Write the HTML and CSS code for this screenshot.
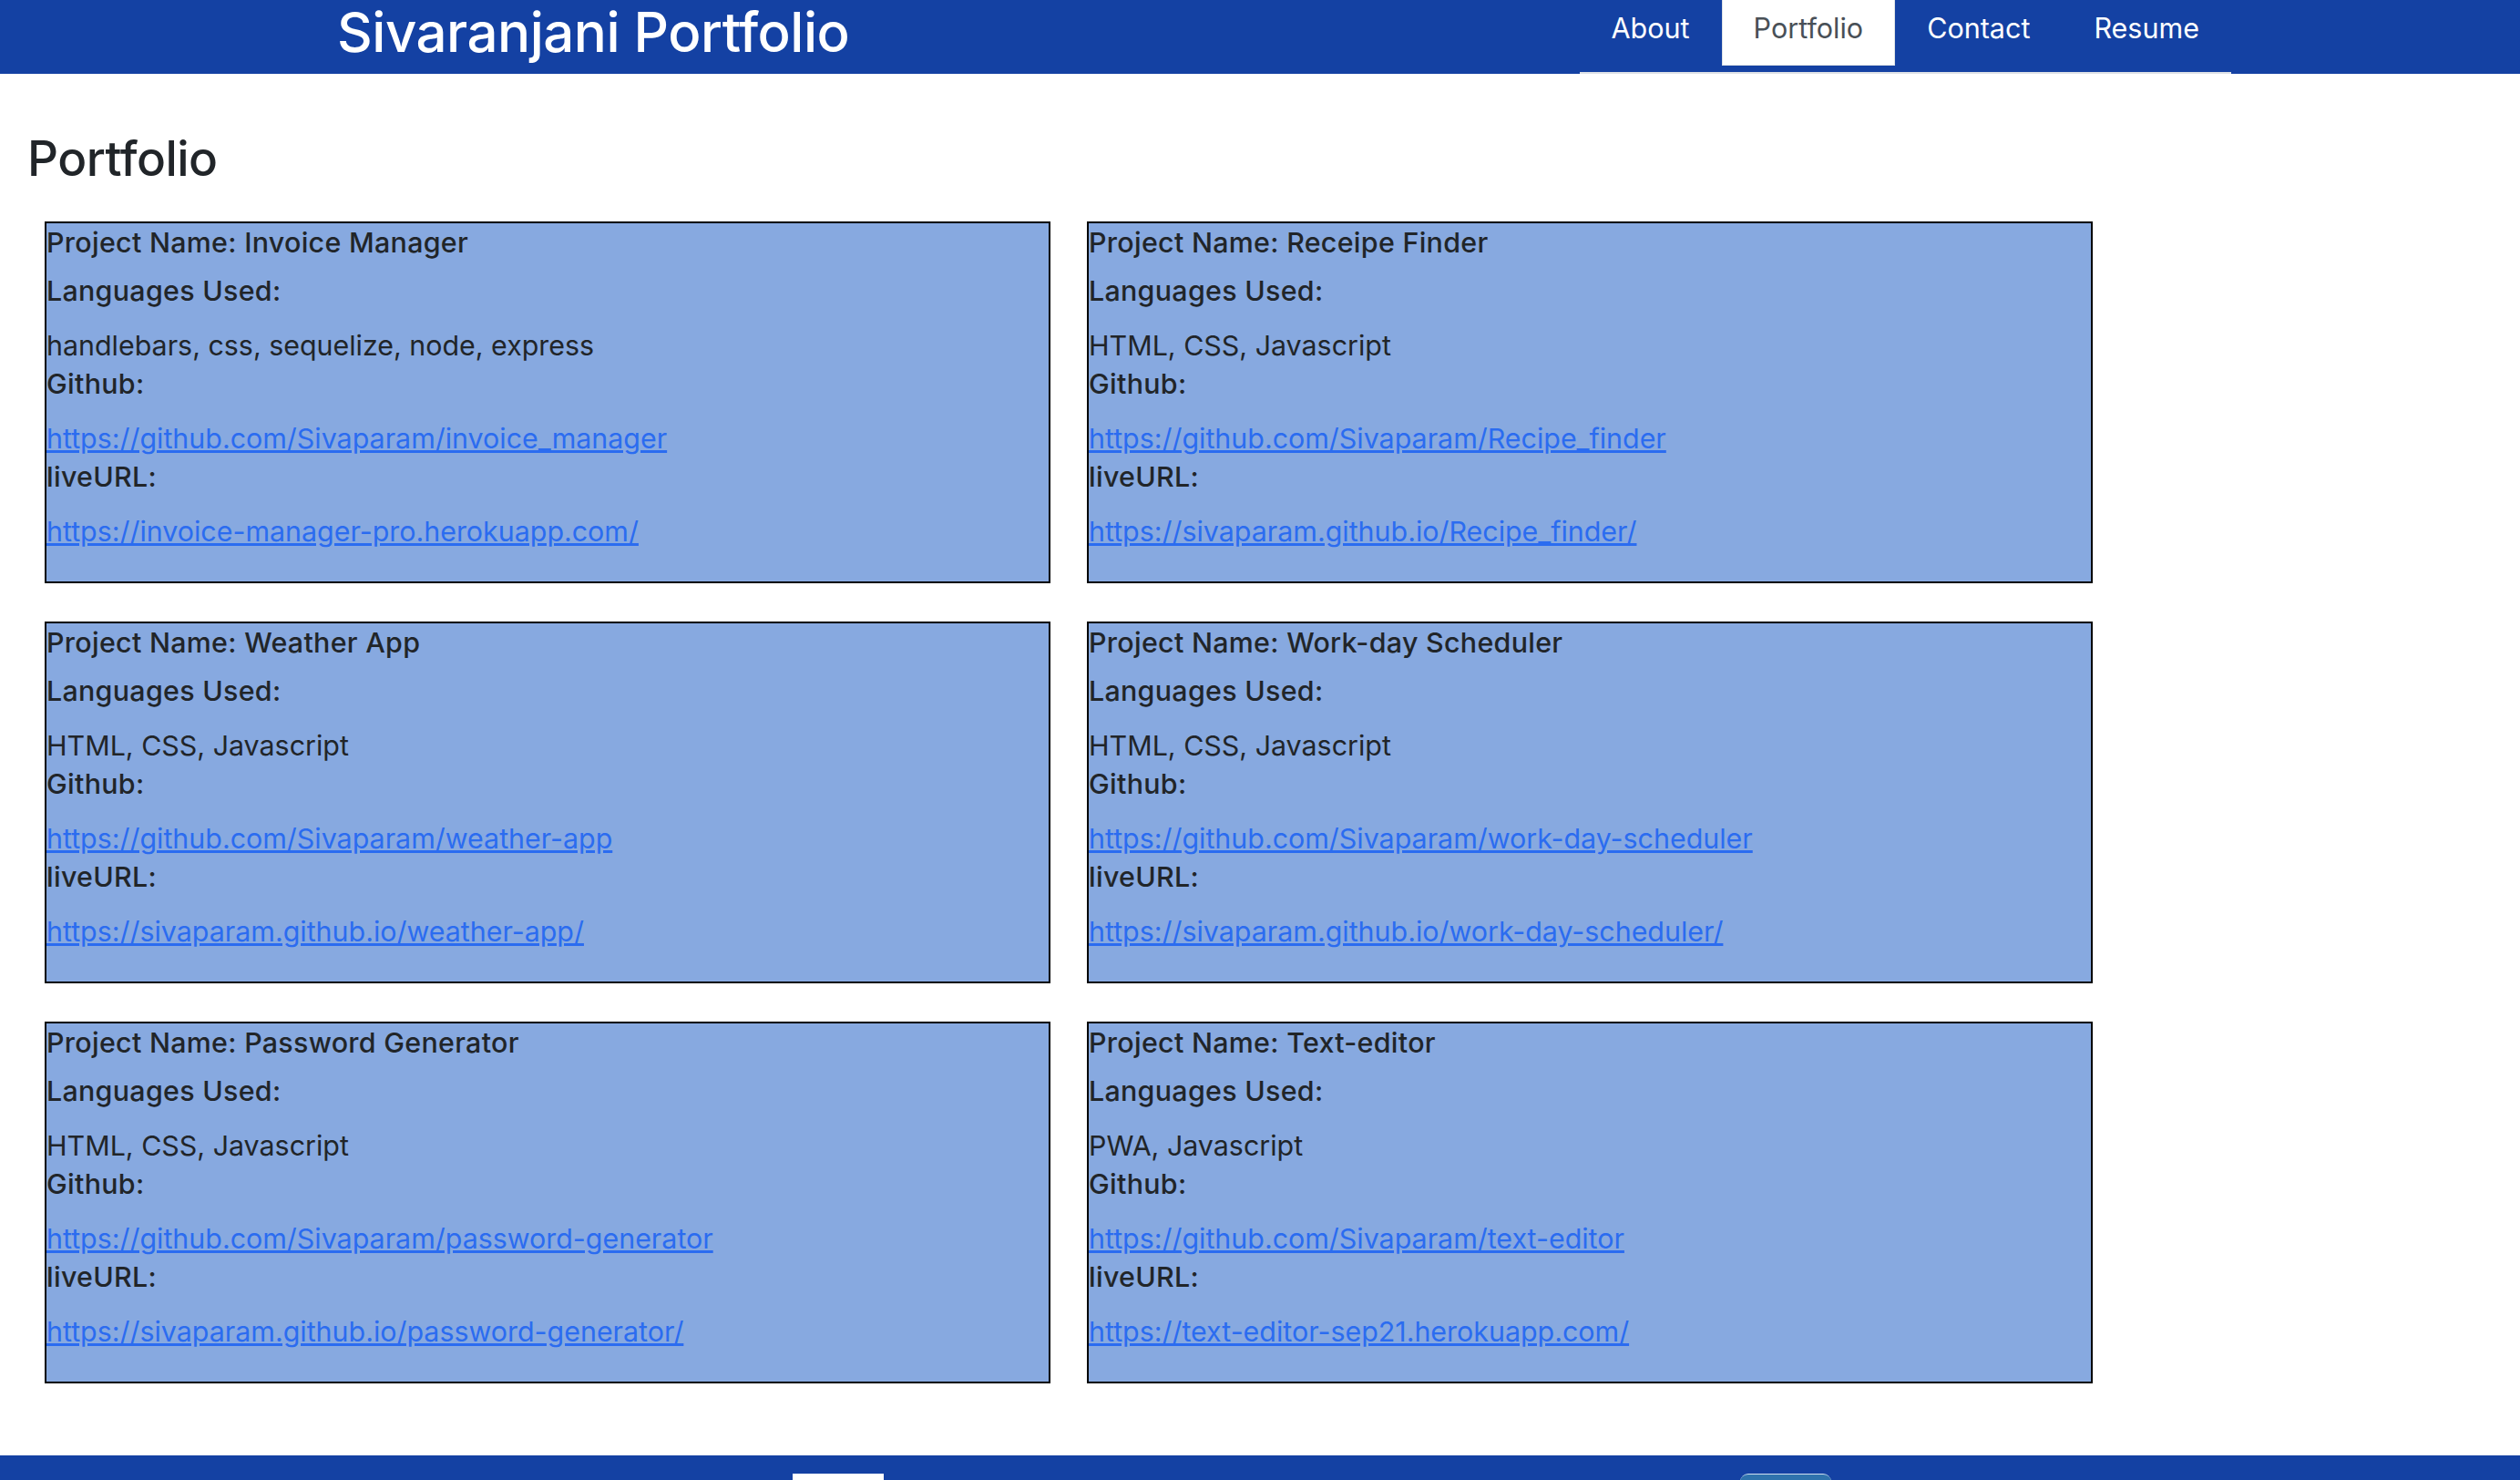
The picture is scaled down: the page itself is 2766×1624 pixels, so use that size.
FILE: index.html
```html
<!DOCTYPE html>
<html lang="en">
<head>
<meta charset="utf-8">
<title>Sivaranjani Portfolio</title>
<link rel="stylesheet" href="styles.css">
</head>
<body>
<header class="site-header">
  <h1 class="brand">Sivaranjani Portfolio</h1>
  <nav class="tabs">
    <a class="tab" href="#">About</a>
    <a class="tab active" href="#">Portfolio</a>
    <a class="tab" href="#">Contact</a>
    <a class="tab" href="#">Resume</a>
  </nav>
</header>
<main class="main">
  <h2 class="page-title">Portfolio</h2>
  <div class="grid">
    <section class="card">
      <div class="label title">Project Name: Invoice Manager</div>
      <div class="label lang">Languages Used:</div>
      <div class="value">handlebars, css, sequelize, node, express</div>
      <div class="label">Github:</div>
      <a class="link" href="#">https://github.com/Sivaparam/invoice_manager</a>
      <div class="label">liveURL:</div>
      <a class="link" href="#">https://invoice-manager-pro.herokuapp.com/</a>
    </section>
    <section class="card">
      <div class="label title">Project Name: Receipe Finder</div>
      <div class="label lang">Languages Used:</div>
      <div class="value">HTML, CSS, Javascript</div>
      <div class="label">Github:</div>
      <a class="link" href="#">https://github.com/Sivaparam/Recipe_finder</a>
      <div class="label">liveURL:</div>
      <a class="link" href="#">https://sivaparam.github.io/Recipe_finder/</a>
    </section>
    <section class="card">
      <div class="label title">Project Name: Weather App</div>
      <div class="label lang">Languages Used:</div>
      <div class="value">HTML, CSS, Javascript</div>
      <div class="label">Github:</div>
      <a class="link" href="#">https://github.com/Sivaparam/weather-app</a>
      <div class="label">liveURL:</div>
      <a class="link" href="#">https://sivaparam.github.io/weather-app/</a>
    </section>
    <section class="card">
      <div class="label title">Project Name: Work-day Scheduler</div>
      <div class="label lang">Languages Used:</div>
      <div class="value">HTML, CSS, Javascript</div>
      <div class="label">Github:</div>
      <a class="link" href="#">https://github.com/Sivaparam/work-day-scheduler</a>
      <div class="label">liveURL:</div>
      <a class="link" href="#">https://sivaparam.github.io/work-day-scheduler/</a>
    </section>
    <section class="card">
      <div class="label title">Project Name: Password Generator</div>
      <div class="label lang">Languages Used:</div>
      <div class="value">HTML, CSS, Javascript</div>
      <div class="label">Github:</div>
      <a class="link" href="#">https://github.com/Sivaparam/password-generator</a>
      <div class="label">liveURL:</div>
      <a class="link" href="#">https://sivaparam.github.io/password-generator/</a>
    </section>
    <section class="card">
      <div class="label title">Project Name: Text-editor</div>
      <div class="label lang">Languages Used:</div>
      <div class="value">PWA, Javascript</div>
      <div class="label">Github:</div>
      <a class="link" href="#">https://github.com/Sivaparam/text-editor</a>
      <div class="label">liveURL:</div>
      <a class="link" href="#">https://text-editor-sep21.herokuapp.com/</a>
    </section>
  </div>
</main>
<footer class="site-footer">
  <span class="icon icon-github"></span>
  <span class="icon icon-linkedin"></span>
</footer>
</body>
</html>
```
FILE: styles.css
```css
html, body {
  margin: 0;
  padding: 0;
}
body {
  font-family: Inter, "Noto Sans", "Liberation Sans", sans-serif;
  color: #212529;
  background: #fff;
}
.site-header {
  height: 81px;
  background: #1441a3;
  display: flex;
  justify-content: space-between;
  align-items: flex-start;
  padding: 0 317px 0 370px;
}
.brand {
  margin: 0;
  color: #fff;
  font-size: 60px;
  font-weight: 500;
  line-height: 1;
  letter-spacing: -0.5px;
  padding-top: 5px;
}
.tabs {
  display: flex;
  align-items: flex-start;
  height: 79px;
  border-bottom: 2px solid #dee2e6;
}
.tab {
  display: block;
  height: 72px;
  box-sizing: border-box;
  padding: 0 34px;
  font-size: 30.5px;
  line-height: 62px;
  color: #fff;
  text-decoration: none;
  border: 1px solid transparent;
  border-top: 0;
}
.tab.active {
  background: #fff;
  color: #495057;
  border-color: #dee2e6;
}
.main {
  padding: 60px 0 79px 0;
}
.page-title {
  margin: 0 0 35px 30px;
  font-size: 53px;
  font-weight: 500;
  line-height: 67px;
  letter-spacing: -0.5px;
}
.grid {
  display: grid;
  grid-template-columns: 1104px 1104px;
  column-gap: 40px;
  row-gap: 42px;
  margin-left: 49px;
}
.card {
  height: 397px;
  box-sizing: border-box;
  background: #87a9e0;
  border: 2px solid #000;
  font-size: 30.4px;
  line-height: 42px;
}
.label {
  font-weight: 500;
  letter-spacing: 0.3px;
}
.title {
  margin-bottom: 11px;
}
.lang {
  margin-bottom: 18px;
}
.link {
  display: block;
  color: #2b6cf0;
  text-decoration: underline;
  margin-top: 18px;
}
.site-footer {
  height: 140px;
  background: #1441a3;
  position: relative;
}
.icon {
  position: absolute;
  top: 20px;
  width: 100px;
  height: 100px;
}
.icon-github {
  left: 870px;
  background: #fff;
}
.icon-linkedin {
  left: 1910px;
  background: #2f73ad;
  border-top: 1px solid #cfe0ef;
  border-radius: 9px 9px 0 0;
}
```
